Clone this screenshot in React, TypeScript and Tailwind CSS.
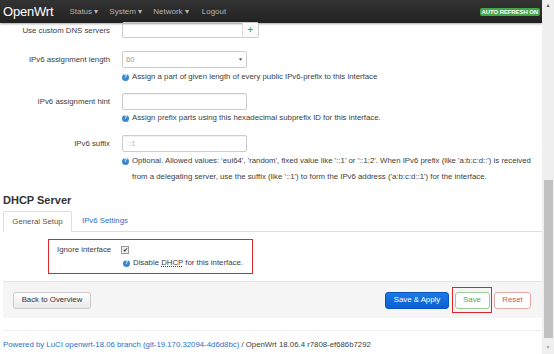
import React from "react";

const font = { fontFamily: '"Liberation Sans", Arial, sans-serif' };

function Help({ children }: { children: React.ReactNode }) {
  return (
    <div className="flex items-start text-[7.8px] text-[#404040] leading-[16px]">
      <span className="mt-[4.5px] mr-[3px] flex h-[7px] w-[7px] shrink-0 items-center justify-center rounded-full bg-[#3a87d0] text-[5.5px] font-bold leading-none text-white">?</span>
      <span>{children}</span>
    </div>
  );
}

function Label({ children }: { children: React.ReactNode }) {
  return <div className="w-[110px] shrink-0 text-right text-[7.8px] text-[#404040]">{children}</div>;
}

export default function App() {
  return (
    <div style={font} className="flex h-[354px] w-[554px] overflow-hidden bg-white">
      <div className="flex w-[542px] flex-col">
        {/* navbar */}
        <div className="flex h-[23px] shrink-0 items-center bg-gradient-to-b from-[#333333] to-[#222222] shadow-[0_1px_2px_rgba(0,0,0,0.35)]">
          <div className="ml-[3px] text-[13px] tracking-[-0.2px] text-white">OpenWrt</div>
          <div className="ml-[16px] flex items-center gap-[11px] text-[8px] text-[#b5b5b5]">
            <span>Status ▾</span>
            <span>System ▾</span>
            <span>Network ▾</span>
            <span className="ml-[2px]">Logout</span>
          </div>
          <div className="ml-auto mr-[2px] rounded-[2px] bg-[#46a546] px-[2px] text-[6px] font-bold leading-[8px] tracking-[-0.1px] text-white">AUTO REFRESH ON</div>
        </div>

        {/* rows */}
        <div className="flex h-[15px] items-center">
          <Label>Use custom DNS servers</Label>
          <div className="ml-[12px] flex h-[16px] w-[137px] -mt-[1px] rounded-[2px] border border-[#ccc] shadow-[inset_0_1px_1px_rgba(0,0,0,0.06)]">
            <div className="flex-1" />
            <div className="flex w-[16px] items-center justify-center border-l border-[#ddd] bg-[#fafafa] text-[9px] font-bold leading-none text-[#46a546]">+</div>
          </div>
        </div>

        <div className="mt-[13px] flex items-center">
          <Label>IPv6 assignment length</Label>
          <div className="ml-[12px] flex h-[17px] w-[125px] items-center justify-between rounded-[2px] border border-[#ccc] px-[3px] text-[7.8px] text-[#999]">
            <span>60</span>
            <span className="text-[5px] text-[#555]">▼</span>
          </div>
        </div>
        <div className="ml-[122px] mt-[1px]">
          <Help>Assign a part of given length of every public IPv6-prefix to this interface</Help>
        </div>

        <div className="mt-[8px] flex items-center">
          <Label>IPv6 assignment hint</Label>
          <div className="ml-[12px] h-[17px] w-[125px] rounded-[2px] border border-[#ccc] shadow-[inset_0_1px_1px_rgba(0,0,0,0.06)]" />
        </div>
        <div className="ml-[122px]">
          <Help>Assign prefix parts using this hexadecimal subprefix ID for this interface.</Help>
        </div>

        <div className="mt-[9px] flex items-center">
          <Label>IPv6 suffix</Label>
          <div className="ml-[12px] flex h-[17px] w-[125px] items-center rounded-[2px] border border-[#ccc] px-[4px] text-[7.8px] text-[#bbb] shadow-[inset_0_1px_1px_rgba(0,0,0,0.06)]">::1</div>
        </div>
        <div className="ml-[122px] mt-[1px]">
          <Help>
            Optional. Allowed values: 'eui64', 'random', fixed value like '::1' or '::1:2'. When IPv6 prefix (like 'a:b:c:d::') is received
            <br />
            from a delegating server, use the suffix (like '::1') to form the IPv6 address ('a:b:c:d::1') for the interface.
          </Help>
        </div>

        {/* DHCP server */}
        <div className="ml-[3px] mt-[7px] text-[11px] font-bold leading-[16px] text-[#333]">DHCP Server</div>

        <div className="mt-[3px] ml-[3px] flex h-[21px] items-end border-b border-[#ddd]">
          <div className="-mb-[1px] flex h-[21px] w-[69px] items-center justify-center rounded-t-[3px] border border-b-white border-[#ddd] bg-white text-[7.8px] text-[#555]">General Setup</div>
          <div className="ml-[10px] flex h-[20px] items-center text-[7.8px] text-[#2a70c9]">IPv6 Settings</div>
        </div>

        <div className="ml-[48px] mt-[7px] h-[35px] w-[205px] border border-[#e0262c]">
          <div className="flex h-[20px] items-center">
            <div className="ml-[8px] w-[64px] text-[7.8px] text-[#404040]">Ignore interface</div>
            <div className="flex h-[8px] w-[8px] items-center justify-center border border-[#999] bg-[#eee] text-[6px] leading-none text-[#222]">✔</div>
          </div>
          <div className="ml-[74px] -mt-[5px]">
            <Help>
              Disable <span className="underline decoration-dotted">DHCP</span> for this interface.
            </Help>
          </div>
        </div>

        {/* actions panel */}
        <div className="ml-[3px] mt-[7px] flex h-[37px] items-center border-t border-[#e5e5e5] bg-[#f5f5f5] pl-[10px] pr-[11px]">
          <div className="flex h-[17px] w-[78px] items-center justify-center rounded-[3px] border border-[#ccc] bg-gradient-to-b from-white to-[#e9e9e9] text-[7.8px] text-[#333]">Back to Overview</div>
          <div className="ml-auto flex h-[17px] w-[64px] items-center justify-center rounded-[3px] border border-[#0754bd] bg-gradient-to-b from-[#1a7ae6] to-[#0b5fd0] text-[7.8px] text-white">Save &amp; Apply</div>
          <div className="ml-[3px] flex h-[26px] w-[40px] items-center justify-center border border-[#e0262c]">
            <div className="flex h-[17px] w-[35px] items-center justify-center rounded-[3px] border border-[#9ccc9c] bg-white text-[7.8px] text-[#4cae4c]">Save</div>
          </div>
          <div className="ml-[2px] flex h-[17px] w-[37px] items-center justify-center rounded-[3px] border border-[#e6a7a7] bg-white text-[7.8px] text-[#d9534f]">Reset</div>
        </div>

        <div className="ml-[3px] mt-[12px] border-t border-[#eee] pt-[9px] text-[7.8px] leading-[10px]">
          <span className="text-[#2a70c9]">Powered by LuCI openwrt-18.06 branch (git-19.170.32094-4d6d8bc)</span>
          <span className="text-[#404040]"> / OpenWrt 18.06.4 r7808-ef686b7292</span>
        </div>
      </div>

      {/* scrollbar */}
      <div className="relative flex w-[12px] flex-col bg-[#f0f0f0]">
        <div className="flex h-[12px] items-center justify-center text-[5px] text-[#505050]">▲</div>
        <div className="flex-1 px-[1px]">
          <div className="mx-auto mt-[168px] h-[158px] w-[9px] bg-[#c1c1c1]" />
        </div>
        <div className="flex h-[12px] items-center justify-center text-[5px] text-[#a0a0a0]">▼</div>
      </div>
    </div>
  );
}
